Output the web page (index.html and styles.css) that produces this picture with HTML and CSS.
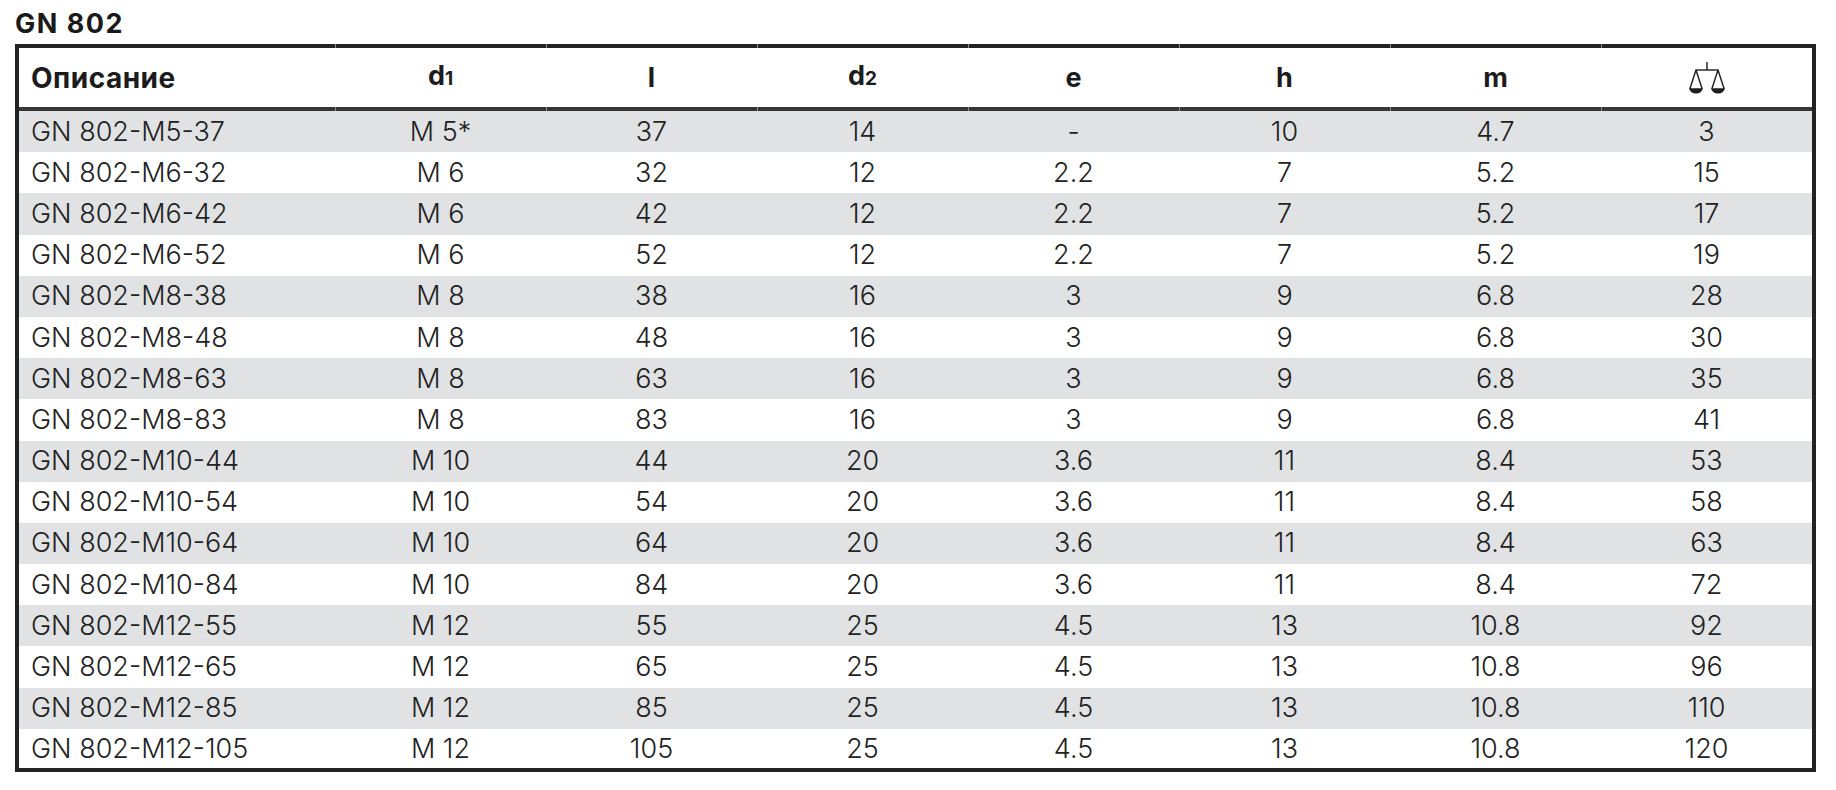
FILE: index.html
```html
<!DOCTYPE html>
<html lang="ru">
<head>
<meta charset="utf-8">
<title>GN 802</title>
<link rel="stylesheet" href="styles.css">
</head>
<body>
<div class="page">
  <h1 class="title">GN 802</h1>
  <table class="spec">
    <colgroup>
      <col class="c-desc"><col class="c-val"><col class="c-val"><col class="c-val"><col class="c-val"><col class="c-val"><col class="c-val"><col class="c-val">
    </colgroup>
    <thead>
      <tr>
        <th class="desc">Описание</th>
        <th class="sep">d<span class="sub">1</span></th>
        <th class="sep">l</th>
        <th class="sep">d<span class="sub">2</span></th>
        <th class="sep">e</th>
        <th class="sep">h</th>
        <th class="sep">m</th>
        <th class="sep">
          <svg class="scale" viewBox="0 0 36 32" width="36" height="32" aria-label="вес">
            <line x1="18" y1="0" x2="18" y2="8" stroke="#1e1e1e" stroke-width="1.4"/>
            <line x1="6.5" y1="8" x2="29.5" y2="8" stroke="#1e1e1e" stroke-width="1.4"/>
            <path d="M7 8 L0.8 27 M7 8 L13.2 27" stroke="#1e1e1e" stroke-width="1.4" fill="none"/>
            <path d="M29 8 L22.8 27 M29 8 L35.2 27" stroke="#1e1e1e" stroke-width="1.4" fill="none"/>
            <path d="M0.2 26.2 L13.8 26.2 A6.8 5.4 0 0 1 0.2 26.2 Z" fill="#1e1e1e"/>
            <path d="M22.2 26.2 L35.8 26.2 A6.8 5.4 0 0 1 22.2 26.2 Z" fill="#1e1e1e"/>
          </svg>
        </th>
      </tr>
    </thead>
    <tbody>
      <tr><td class="desc">GN 802-M5-37</td><td>M 5*</td><td>37</td><td>14</td><td>-</td><td>10</td><td>4.7</td><td>3</td></tr>
      <tr><td class="desc">GN 802-M6-32</td><td>M 6</td><td>32</td><td>12</td><td>2.2</td><td>7</td><td>5.2</td><td>15</td></tr>
      <tr><td class="desc">GN 802-M6-42</td><td>M 6</td><td>42</td><td>12</td><td>2.2</td><td>7</td><td>5.2</td><td>17</td></tr>
      <tr><td class="desc">GN 802-M6-52</td><td>M 6</td><td>52</td><td>12</td><td>2.2</td><td>7</td><td>5.2</td><td>19</td></tr>
      <tr><td class="desc">GN 802-M8-38</td><td>M 8</td><td>38</td><td>16</td><td>3</td><td>9</td><td>6.8</td><td>28</td></tr>
      <tr><td class="desc">GN 802-M8-48</td><td>M 8</td><td>48</td><td>16</td><td>3</td><td>9</td><td>6.8</td><td>30</td></tr>
      <tr><td class="desc">GN 802-M8-63</td><td>M 8</td><td>63</td><td>16</td><td>3</td><td>9</td><td>6.8</td><td>35</td></tr>
      <tr><td class="desc">GN 802-M8-83</td><td>M 8</td><td>83</td><td>16</td><td>3</td><td>9</td><td>6.8</td><td>41</td></tr>
      <tr><td class="desc">GN 802-M10-44</td><td>M 10</td><td>44</td><td>20</td><td>3.6</td><td>11</td><td>8.4</td><td>53</td></tr>
      <tr><td class="desc">GN 802-M10-54</td><td>M 10</td><td>54</td><td>20</td><td>3.6</td><td>11</td><td>8.4</td><td>58</td></tr>
      <tr><td class="desc">GN 802-M10-64</td><td>M 10</td><td>64</td><td>20</td><td>3.6</td><td>11</td><td>8.4</td><td>63</td></tr>
      <tr><td class="desc">GN 802-M10-84</td><td>M 10</td><td>84</td><td>20</td><td>3.6</td><td>11</td><td>8.4</td><td>72</td></tr>
      <tr><td class="desc">GN 802-M12-55</td><td>M 12</td><td>55</td><td>25</td><td>4.5</td><td>13</td><td>10.8</td><td>92</td></tr>
      <tr><td class="desc">GN 802-M12-65</td><td>M 12</td><td>65</td><td>25</td><td>4.5</td><td>13</td><td>10.8</td><td>96</td></tr>
      <tr><td class="desc">GN 802-M12-85</td><td>M 12</td><td>85</td><td>25</td><td>4.5</td><td>13</td><td>10.8</td><td>110</td></tr>
      <tr class="last"><td class="desc">GN 802-M12-105</td><td>M 12</td><td>105</td><td>25</td><td>4.5</td><td>13</td><td>10.8</td><td>120</td></tr>
    </tbody>
  </table>
</div>
</body>
</html>
```

FILE: styles.css
```css
html, body {
  margin: 0;
  padding: 0;
  background: #ffffff;
}

.page {
  padding: 9px 0 0 15px;
  font-family: "Inter", "Roboto", "Liberation Sans", sans-serif;
  color: #262626;
}

.title {
  margin: 0 0 5px 0;
  font-size: 27px;
  line-height: 30px;
  font-weight: 700;
  letter-spacing: 1.5px;
  color: #1a1a1a;
}

.spec {
  width: 1801px;
  table-layout: fixed;
  border-collapse: separate;
  border-spacing: 0;
  border: 4px solid #222222;
}

.c-desc { width: 316px; }
.c-val { width: 211px; }

.spec th {
  position: relative;
  height: 59px;
  padding: 0;
  border-bottom: 4px solid #363636;
  font-size: 27px;
  font-weight: 700;
  color: #1c1c1c;
  text-align: center;
  vertical-align: middle;
  line-height: 30px;
}

.spec th.desc {
  text-align: left;
  padding-left: 12px;
  font-size: 28px;
  letter-spacing: 0.5px;
}

.spec th.sep::before,
.spec th.sep::after {
  content: "";
  position: absolute;
  left: 0;
  width: 1px;
  height: 4px;
  background: #8a8a8a;
}

.spec th.sep::before { top: -4px; }
.spec th.sep::after { bottom: -4px; }

.sub {
  font-size: 19px;
  font-weight: 700;
}

.scale {
  display: block;
  margin: 1px auto 0;
}

.spec td {
  height: 41.2px;
  padding: 0;
  font-size: 27px;
  font-weight: 300;
  line-height: 30px;
  text-align: center;
  vertical-align: middle;
  color: #222222;
}

.spec tr.last td {
  height: 39.4px;
}

.spec td.desc {
  text-align: left;
  padding-left: 12px;
}

.spec tbody tr:nth-child(odd) td {
  background: #e1e2e4;
}
```
